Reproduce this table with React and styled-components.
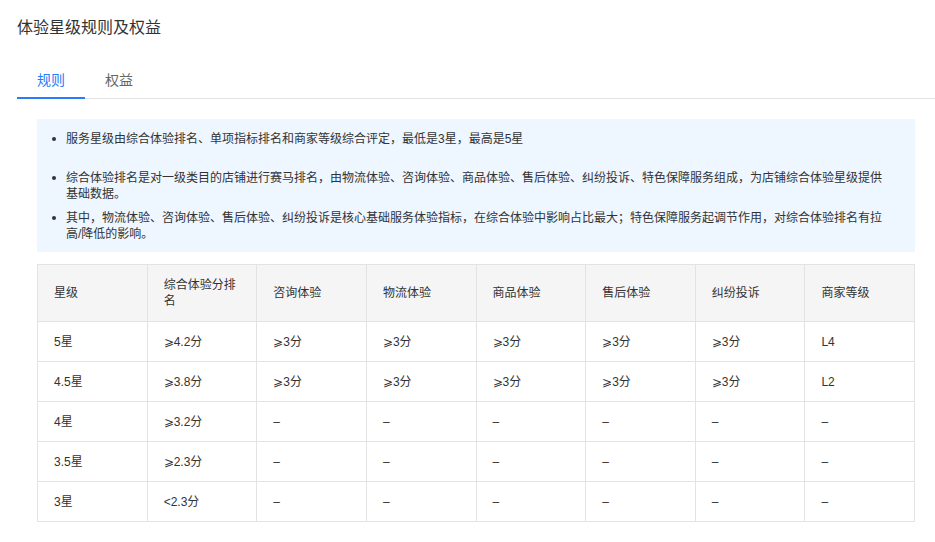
import React, { useState } from 'react';
import styled, { createGlobalStyle } from 'styled-components';

const GlobalStyle = createGlobalStyle`
  body {
    margin: 0;
    background: #fff;
    font-family: "Liberation Sans", "Noto Sans CJK SC", sans-serif;
    color: #333;
  }
`;

const Page = styled.div`
  width: 935px;
  padding: 16px 0 20px;
  box-sizing: border-box;
`;

const Title = styled.h1`
  margin: 0 0 22px 17px;
  font-size: 16px;
  line-height: 24px;
  font-weight: 400;
  color: #333;
`;

const TabBar = styled.div`
  display: flex;
  margin-left: 17px;
  border-bottom: 1px solid #e3e3e3;
`;

const Tab = styled.div`
  padding: 9px 20px 8px;
  font-size: 14px;
  line-height: 18px;
  cursor: pointer;
  color: ${(p) => (p.$active ? '#2a7cf7' : '#666')};
  border-bottom: 2px solid ${(p) => (p.$active ? '#2a7cf7' : 'transparent')};
  margin-bottom: -1px;
`;

const Body = styled.div`
  padding: 20px 20px 0 37px;
`;

const Notice = styled.ul`
  margin: 0;
  list-style: none;
  background: #eef6ff;
  padding: 12px 29px 10px 29px;
  font-size: 12px;
  line-height: 16px;
  color: #333;
`;

const NoticeItem = styled.li`
  position: relative;
  margin-bottom: ${(p) => (p.$spaced ? '23px' : '8px')};
  &:last-child {
    margin-bottom: 0;
  }
  &::before {
    content: '';
    position: absolute;
    left: -14px;
    top: 6px;
    width: 4px;
    height: 4px;
    border-radius: 50%;
    background: #333;
  }
`;

const Table = styled.table`
  width: 100%;
  margin-top: 12px;
  border-collapse: collapse;
  table-layout: fixed;
  font-size: 12px;
  line-height: 16px;
  color: #333;
`;

const Th = styled.th`
  background: #f5f5f5;
  border: 1px solid #e3e3e3;
  padding: 12px 16px;
  text-align: left;
  font-weight: 400;
  vertical-align: middle;
`;

const Td = styled.td`
  border: 1px solid #e3e3e3;
  padding: 12px 16px 11px;
  height: 16px;
  text-align: left;
  vertical-align: middle;
`;

const headers = ['星级', '综合体验分排名', '咨询体验', '物流体验', '商品体验', '售后体验', '纠纷投诉', '商家等级'];

const rows = [
  ['5星', '⩾4.2分', '⩾3分', '⩾3分', '⩾3分', '⩾3分', '⩾3分', 'L4'],
  ['4.5星', '⩾3.8分', '⩾3分', '⩾3分', '⩾3分', '⩾3分', '⩾3分', 'L2'],
  ['4星', '⩾3.2分', '–', '–', '–', '–', '–', '–'],
  ['3.5星', '⩾2.3分', '–', '–', '–', '–', '–', '–'],
  ['3星', '<2.3分', '–', '–', '–', '–', '–', '–'],
];

export default function App() {
  const [tab, setTab] = useState('rule');
  return (
    <Page>
      <GlobalStyle />
      <Title>体验星级规则及权益</Title>
      <TabBar>
        <Tab $active={tab === 'rule'} onClick={() => setTab('rule')}>规则</Tab>
        <Tab $active={tab === 'right'} onClick={() => setTab('right')}>权益</Tab>
      </TabBar>
      <Body>
        <Notice>
          <NoticeItem $spaced>服务星级由综合体验排名、单项指标排名和商家等级综合评定，最低是3星，最高是5星</NoticeItem>
          <NoticeItem>综合体验排名是对一级类目的店铺进行赛马排名，由物流体验、咨询体验、商品体验、售后体验、纠纷投诉、特色保障服务组成，为店铺综合体验星级提供基础数据。</NoticeItem>
          <NoticeItem>其中，物流体验、咨询体验、售后体验、纠纷投诉是核心基础服务体验指标，在综合体验中影响占比最大；特色保障服务起调节作用，对综合体验排名有拉高/降低的影响。</NoticeItem>
        </Notice>
        <Table>
          <thead>
            <tr>
              {headers.map((h) => (
                <Th key={h}>{h}</Th>
              ))}
            </tr>
          </thead>
          <tbody>
            {rows.map((r) => (
              <tr key={r[0]}>
                {r.map((c, i) => (
                  <Td key={i}>{c}</Td>
                ))}
              </tr>
            ))}
          </tbody>
        </Table>
      </Body>
    </Page>
  );
}
